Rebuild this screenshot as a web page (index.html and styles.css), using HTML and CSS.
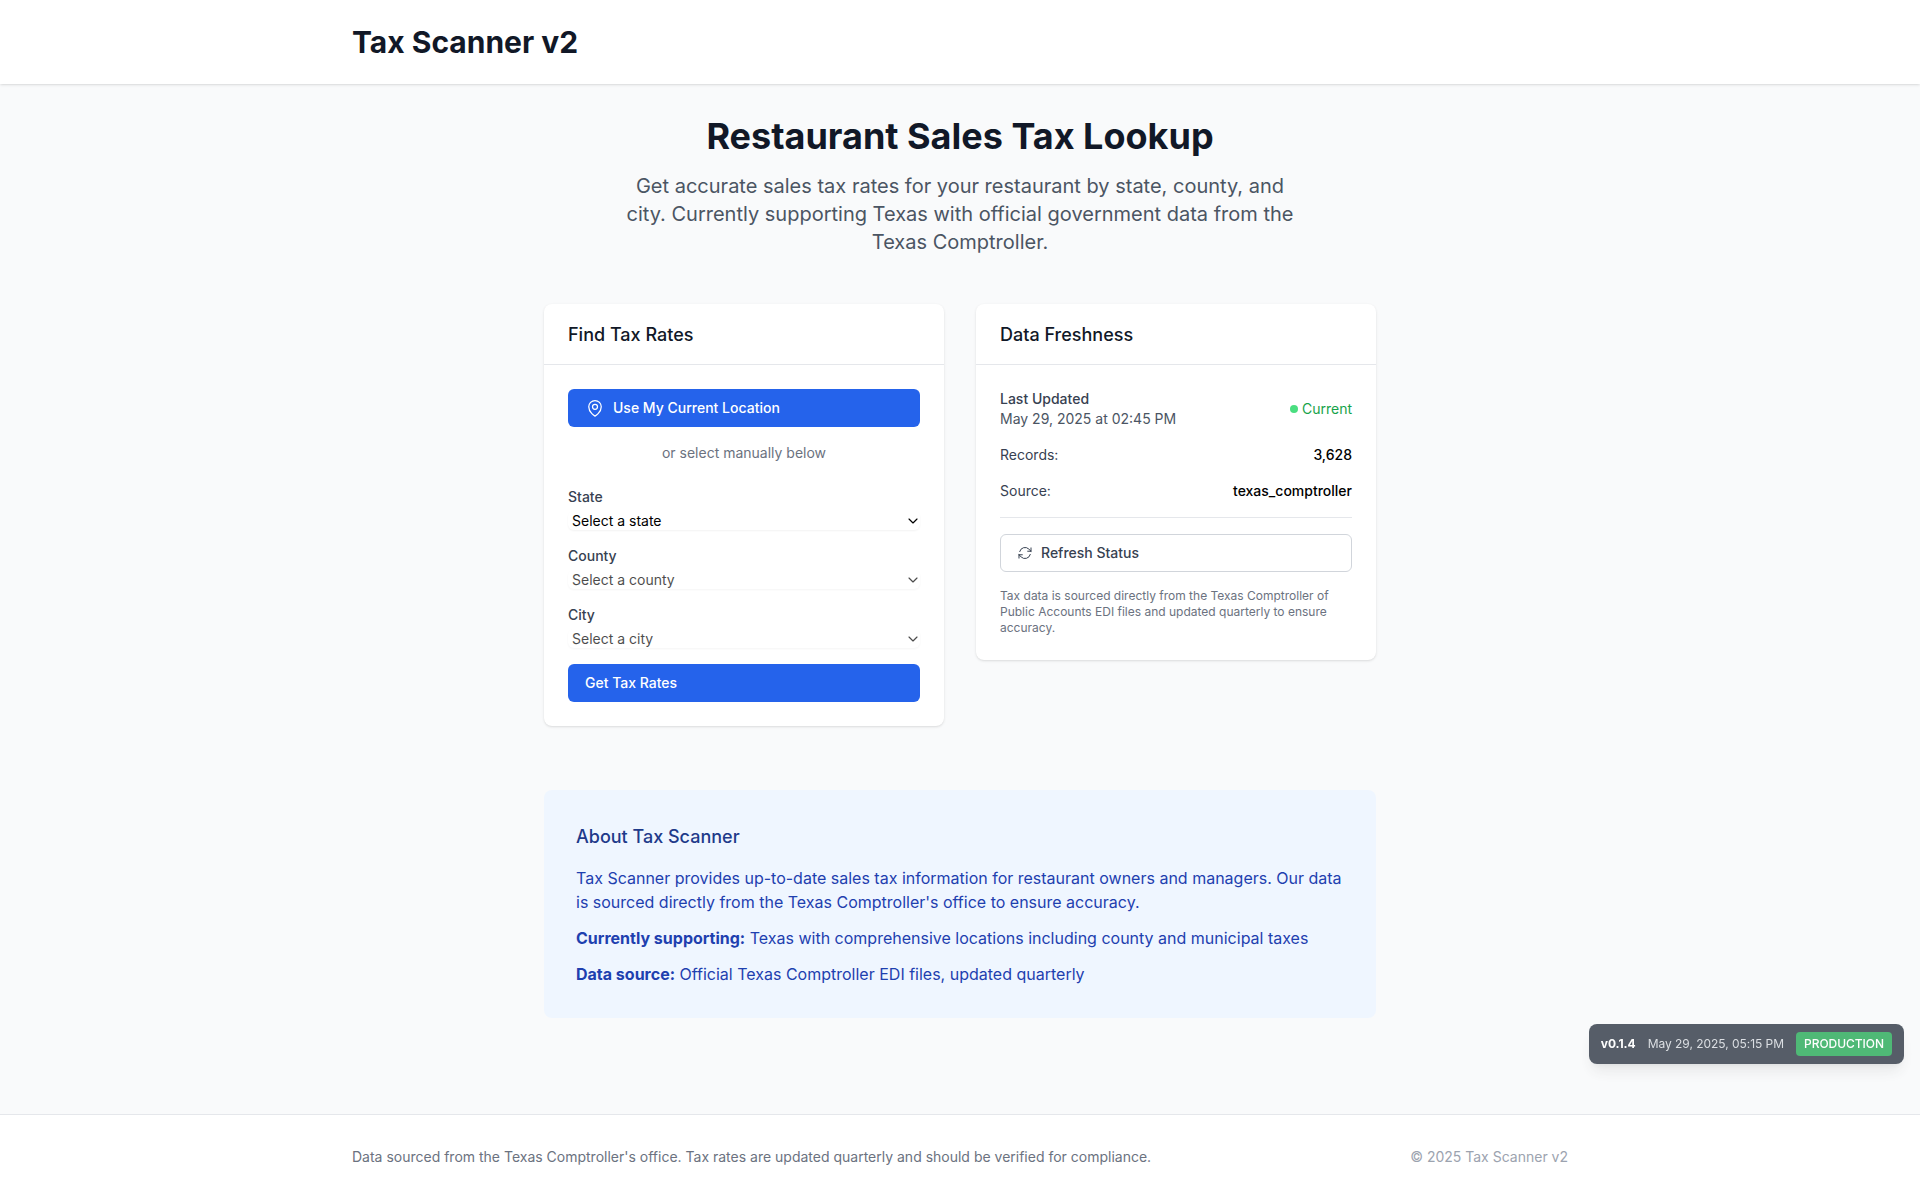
FILE: index.html
```html
<!DOCTYPE html>
<html lang="en">
<head>
<meta charset="utf-8">
<title>Tax Scanner v2</title>
<link rel="stylesheet" href="styles.css">
</head>
<body>
<header class="site-header">
  <div class="container"><h1 class="brand">Tax Scanner v2</h1></div>
</header>

<main class="main">
  <section class="hero">
    <h2 class="hero-title">Restaurant Sales Tax Lookup</h2>
    <p class="hero-text">Get accurate sales tax rates for your restaurant by state, county, and city. Currently supporting Texas with official government data from the Texas Comptroller.</p>
  </section>

  <div class="cards">
    <section class="card">
      <h3 class="card-header">Find Tax Rates</h3>
      <div class="card-body">
        <button class="btn btn-primary" type="button">
          <svg class="icon-lg" viewBox="0 0 24 24"><path d="M15 10.5a3 3 0 1 1-6 0 3 3 0 0 1 6 0Z"/><path d="M19.5 10.5c0 7.142-7.5 11.25-7.5 11.25S4.5 17.642 4.5 10.5a7.5 7.5 0 1 1 15 0Z"/></svg>
          Use My Current Location
        </button>
        <p class="divider-text">or select manually below</p>
        <form class="form">
          <div class="field">
            <label class="label" for="state">State</label>
            <div class="select-wrap">
              <select class="select" id="state"><option>Select a state</option></select>
              <svg class="chevron" viewBox="0 0 10 6"><path d="M1 1l4 4 4-4"/></svg>
            </div>
          </div>
          <div class="field">
            <label class="label" for="county">County</label>
            <div class="select-wrap is-disabled">
              <select class="select" id="county" disabled><option>Select a county</option></select>
              <svg class="chevron" viewBox="0 0 10 6"><path d="M1 1l4 4 4-4"/></svg>
            </div>
          </div>
          <div class="field">
            <label class="label" for="city">City</label>
            <div class="select-wrap is-disabled">
              <select class="select" id="city" disabled><option>Select a city</option></select>
              <svg class="chevron" viewBox="0 0 10 6"><path d="M1 1l4 4 4-4"/></svg>
            </div>
          </div>
          <button class="btn btn-primary" type="button">Get Tax Rates</button>
        </form>
      </div>
    </section>

    <section class="card">
      <h3 class="card-header">Data Freshness</h3>
      <div class="card-body stack">
        <div class="row">
          <div>
            <p class="row-title">Last Updated</p>
            <p class="row-date">May 29, 2025 at 02:45 PM</p>
          </div>
          <div class="status"><span class="dot"></span>Current</div>
        </div>
        <div class="row"><span class="row-label">Records:</span><span class="row-value">3,628</span></div>
        <div class="row"><span class="row-label">Source:</span><span class="row-value">texas_comptroller</span></div>
        <div class="refresh">
          <button class="btn btn-outline" type="button">
            <svg class="icon-sm" viewBox="0 0 24 24"><path d="M16.023 9.348h4.992v-.001M2.985 19.644v-4.992m0 0h4.992m-4.993 0 3.181 3.183a8.25 8.25 0 0 0 13.803-3.7M4.031 9.865a8.25 8.25 0 0 1 13.803-3.7l3.181 3.182m0-4.991v4.99"/></svg>
            Refresh Status
          </button>
        </div>
        <p class="note">Tax data is sourced directly from the Texas Comptroller of Public Accounts EDI files and updated quarterly to ensure accuracy.</p>
      </div>
    </section>
  </div>

  <section class="about">
    <h3 class="about-title">About Tax Scanner</h3>
    <div class="about-text">
      <p>Tax Scanner provides up-to-date sales tax information for restaurant owners and managers. Our data is sourced directly from the Texas Comptroller's office to ensure accuracy.</p>
      <p><strong>Currently supporting:</strong> Texas with comprehensive locations including county and municipal taxes</p>
      <p><strong>Data source:</strong> Official Texas Comptroller EDI files, updated quarterly</p>
    </div>
  </section>
</main>

<footer class="site-footer">
  <div class="container footer-row">
    <p class="footer-note">Data sourced from the Texas Comptroller's office. Tax rates are updated quarterly and should be verified for compliance.</p>
    <p class="footer-copy">© 2025 Tax Scanner v2</p>
  </div>
</footer>

<div class="version">
  <span class="version-number">v0.1.4</span>
  <span class="version-date">May 29, 2025, 05:15 PM</span>
  <span class="version-env">PRODUCTION</span>
</div>
</body>
</html>
```
FILE: styles.css
```css
*, *::before, *::after { box-sizing: border-box; }

body, h1, h2, h3, p { margin: 0; }

body {
  min-height: 100vh;
  background: #f9fafb;
  color: #000;
  font-family: Inter, "Liberation Sans", sans-serif;
  font-size: 16px;
  line-height: 24px;
  -webkit-font-smoothing: antialiased;
}

svg { flex-shrink: 0; fill: none; stroke: currentColor; stroke-linecap: round; stroke-linejoin: round; }

.container { max-width: 1280px; margin: 0 auto; padding: 0 32px; }

.site-header {
  padding: 24px 0;
  background: #fff;
  box-shadow: 0 1px 3px rgba(0, 0, 0, 0.1), 0 1px 2px -1px rgba(0, 0, 0, 0.1);
}
.brand { color: #111827; font-size: 30px; font-weight: 700; line-height: 36px; }

.main { max-width: 896px; margin: 0 auto; padding: 32px; }

.hero { margin-bottom: 48px; text-align: center; }
.hero-title { margin-bottom: 16px; color: #111827; font-size: 36px; font-weight: 700; line-height: 40px; }
.hero-text { max-width: 672px; margin: 0 auto; color: #4b5563; font-size: 20px; line-height: 28px; }

.cards { display: grid; grid-template-columns: 1fr 1fr; align-items: start; gap: 32px; }
.card {
  border-radius: 8px;
  background: #fff;
  box-shadow: 0 1px 3px rgba(0, 0, 0, 0.1), 0 1px 2px -1px rgba(0, 0, 0, 0.1);
}
.card-header {
  padding: 17px 24px 15px;
  border-bottom: 1px solid #e5e7eb;
  color: #111827;
  font-size: 18px;
  font-weight: 500;
  line-height: 28px;
}
.card-body { padding: 24px; font-size: 14px; line-height: 20px; }

.btn {
  display: flex;
  align-items: center;
  gap: 8px;
  width: 100%;
  padding: 8px 16px;
  border: 1px solid transparent;
  border-radius: 6px;
  font: 500 14px/20px Inter, "Liberation Sans", sans-serif;
}
.btn-primary { background: #2563eb; color: #fff; }
.btn-outline { border-color: #d1d5db; background: #fff; color: #374151; }
.icon-lg { width: 20px; height: 20px; stroke-width: 1.5; }
.icon-sm { width: 16px; height: 16px; stroke-width: 1.5; }

.divider-text { margin: 16px 0 24px; color: #6b7280; text-align: center; }

.form { display: flex; flex-direction: column; gap: 16px; }
.label { display: block; margin-bottom: 4px; color: #374151; font-weight: 500; }
.select-wrap {
  display: flex;
  align-items: center;
  height: 19px;
  padding-right: 2.5px;
  border-radius: 6px;
  box-shadow: 0 1px 2px rgba(0, 0, 0, 0.05);
}
.select-wrap.is-disabled { opacity: 0.7; }
.select {
  flex: 1;
  height: 19px;
  padding: 0 4px;
  border: 0;
  background: transparent;
  color: #000;
  opacity: 1;
  font: 400 14px/19px Inter, "Liberation Sans", sans-serif;
  appearance: none;
}
.chevron { width: 10px; height: 6px; stroke-width: 1.15; }

.stack { display: flex; flex-direction: column; gap: 16px; }
.row { display: flex; align-items: center; justify-content: space-between; }
.row-title { color: #374151; font-weight: 500; }
.row-date { color: #4b5563; }
.row-label { color: #374151; }
.row-value { font-weight: 500; }
.status { display: flex; align-items: center; gap: 4px; color: #16a34a; }
.dot { width: 8px; height: 8px; border-radius: 50%; background: #4ade80; }
.refresh { padding-top: 16px; border-top: 1px solid #e5e7eb; }
.note { color: #6b7280; font-size: 12px; line-height: 16px; }

.about { margin: 64px 0; padding: 33px 32px 32px; border-radius: 8px; background: #eff6ff; }
.about-title { margin-bottom: 15px; color: #1e3a8a; font-size: 18px; font-weight: 500; line-height: 28px; }
.about-text { display: flex; flex-direction: column; gap: 12px; color: #1e40af; }

.site-footer { padding: 32px 0; border-top: 1px solid #e5e7eb; background: #fff; font-size: 14px; line-height: 20px; }
.footer-row { display: flex; justify-content: space-between; }
.footer-note { color: #6b7280; }
.footer-copy { color: #9ca3af; }

.version {
  position: fixed;
  right: 16px;
  bottom: 135px;
  display: flex;
  align-items: center;
  gap: 12px;
  padding: 8px 12px;
  border-radius: 8px;
  background: #1f2937;
  box-shadow: 0 10px 15px -3px rgba(0, 0, 0, 0.1), 0 4px 6px -4px rgba(0, 0, 0, 0.1);
  opacity: 0.75;
  color: #fff;
  font-size: 12px;
  letter-spacing: -0.04px;
  line-height: 16px;
}
.version-number { font-weight: 700; }
.version-date { color: #d1d5db; }
.version-env { padding: 4px 8px; border-radius: 4px; background: #16a34a; font-weight: 500; }
```
